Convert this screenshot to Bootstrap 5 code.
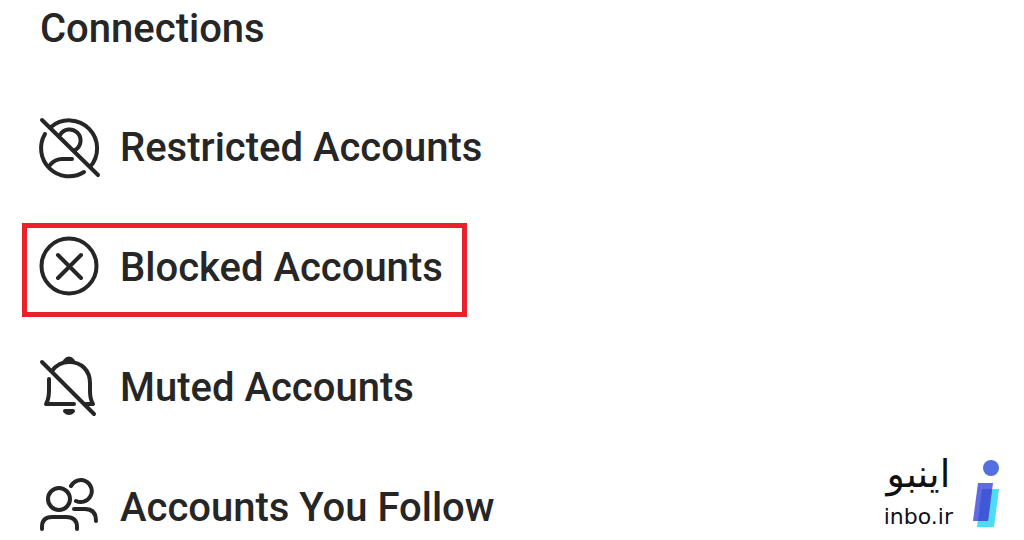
<!DOCTYPE html>
<html lang="en">
<head>
<meta charset="utf-8">
<meta name="viewport" content="width=device-width, initial-scale=1">
<title>Connections</title>
<link href="https://cdn.jsdelivr.net/npm/bootstrap@5.3.0/dist/css/bootstrap.min.css" rel="stylesheet">
<style>
body { font-family: Roboto, sans-serif; background: #fff; color: #262626; }
.page { min-height: 100vh; padding: 9px 24px 0 40px; }
.section-title { font-size: 40px; font-weight: 500; line-height: 40px; margin-bottom: 69px; }
.settings { gap: 60px; }
.setting { height: 60px; gap: 20px; font-size: 40px; font-weight: 500; line-height: 60px; color: #262626; }
.setting svg { width: 60px; height: 60px; flex: none; overflow: visible; fill: none; stroke: #262626; stroke-width: 4; stroke-linecap: round; stroke-linejoin: round; }
.highlight { box-sizing: content-box; border: 5px solid #e8212a; padding: 10px 19px 14px 13px; margin: -15px -24px -19px -18px; }
.brand-link { color: #111; gap: 19px; margin-bottom: 6px; }
.brand-text { gap: 5px; }
.brand-fa { font: 38px/42px "DejaVu Sans", sans-serif; }
.brand-url { font: 22px/34px "DejaVu Sans", sans-serif; }
.brand-link svg { width: 28px; height: 70px; }
</style>
</head>
<body>
<div class="page d-flex justify-content-between">
  <main>
    <h1 class="section-title">Connections</h1>
    <nav class="settings d-flex flex-column align-items-start" aria-label="Connections">
      <a href="#restricted" class="setting d-flex align-items-center text-decoration-none text-nowrap">
        <svg viewBox="0 0 60 60" aria-hidden="true"><path d="M2 2 58 57M11 9A28 28 0 0 1 50 49M5 16A28 28 0 0 0 44 54M20 17A11 11 0 1 1 35 32M10 47Q15 41 22 41H32"/></svg>
        <span>Restricted Accounts</span>
      </a>
      <a href="#blocked" class="setting highlight d-flex align-items-center text-decoration-none text-nowrap">
        <svg viewBox="0 0 60 60" aria-hidden="true"><circle cx="29" cy="28" r="27.5"/><path d="M18 17 41 40M41 17 18 40"/></svg>
        <span>Blocked Accounts</span>
      </a>
      <a href="#muted" class="setting d-flex align-items-center text-decoration-none text-nowrap">
        <svg viewBox="0 0 60 60" aria-hidden="true"><path d="M2 4 54 56M12 13C17 6 22 4 29 4C42 4 50 13 50 25V33Q50 41 53 46H46M9 21V32Q9 41 6 46H34"/><path d="M25 3Q29-2 33 3ZM25 53H33Q29 57 25 53Z" fill="#262626"/></svg>
        <span>Muted Accounts</span>
      </a>
      <a href="#following" class="setting d-flex align-items-center text-decoration-none text-nowrap">
        <svg viewBox="0 0 60 60" aria-hidden="true"><circle cx="19" cy="21" r="11"/><path d="M2 51V49Q2 39 12 39H26Q37 39 37 49V51M31 8A11 11 0 1 1 36 23M34 31H45Q56 31 56 43"/></svg>
        <span>Accounts You Follow</span>
      </a>
    </nav>
  </main>
  <a href="#home" class="brand-link d-flex align-items-center align-self-end text-decoration-none">
    <span class="brand-text d-flex flex-column align-items-center">
      <span class="brand-fa" lang="fa" dir="rtl">اینبو</span>
      <span class="brand-url">inbo.ir</span>
    </span>
    <svg viewBox="0 0 28 70" aria-hidden="true"><circle cx="19" cy="9" r="8" fill="#5270e0"/><path d="M10 30H27L22 68H5Z" fill="#4ddcf5"/><path d="M6 24H21L16 62H1Z" fill="#606be0"/><path d="M10 30H20L16 62H6Z" fill="#4058d6"/></svg>
  </a>
</div>
<script src="https://cdn.jsdelivr.net/npm/bootstrap@5.3.0/dist/js/bootstrap.bundle.min.js"></script>
</body>
</html>
